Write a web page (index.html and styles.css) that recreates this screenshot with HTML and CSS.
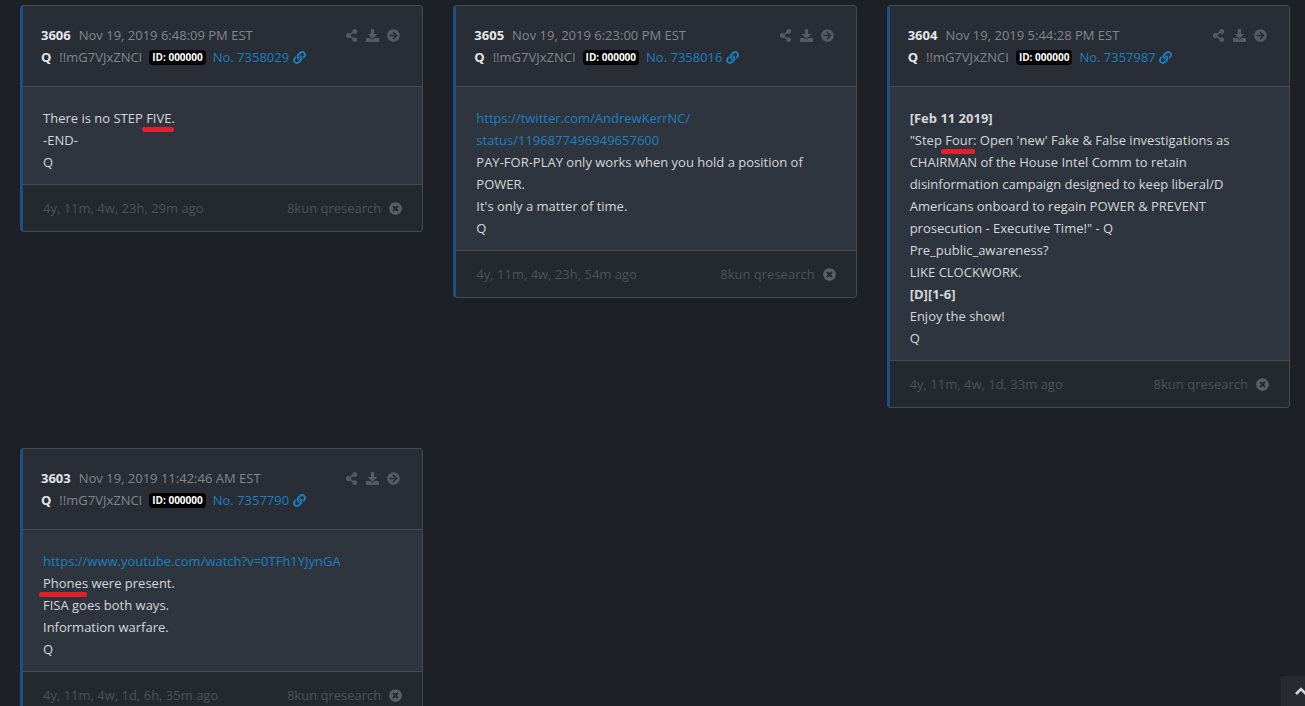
FILE: index.html
```html
<!DOCTYPE html>
<html lang="en">
<head>
<meta charset="utf-8">
<title>Posts</title>
<meta name="viewport" content="width=device-width, initial-scale=1">
<link rel="stylesheet" href="styles.css">
</head>
<body>
<svg class="sprite" aria-hidden="true">
  <symbol id="share" viewBox="0 0 448 512"><path d="M352 320c-22.600 0-43.400 7.800-59.800 20.900l-102.500-64.100a96.600 96.600 0 0 0 0-41.600l102.500-64.100C308.600 184.200 329.400 192 352 192c53 0 96-43 96-96S405 0 352 0s-96 43-96 96c0 7.200.8 14.100 2.300 20.800l-102.500 64.100C139.400 167.800 118.600 160 96 160c-53 0-96 43-96 96s43 96 96 96c22.600 0 43.400-7.800 59.800-20.900l102.500 64.100A96.300 96.300 0 0 0 256 416c0 53 43 96 96 96s96-43 96-96-43-96-96-96z"/></symbol>
  <symbol id="download" viewBox="0 0 512 512"><path d="M216 0h80c13.300 0 24 10.700 24 24v168h87.700c17.800 0 26.700 21.500 14.100 34.100L269.700 378.300c-7.500 7.500-19.800 7.500-27.300 0L90.100 226.100c-12.600-12.600-3.700-34.100 14.100-34.100H192V24c0-13.300 10.700-24 24-24zm296 376v112c0 13.300-10.700 24-24 24H24c-13.300 0-24-10.700-24-24V376c0-13.300 10.700-24 24-24h146.700l49 49c20.100 20.100 52.500 20.100 72.600 0l49-49H488c13.300 0 24 10.700 24 24z"/></symbol>
  <symbol id="arrow" viewBox="0 0 512 512"><path d="M256 8c137 0 248 111 248 248S393 504 256 504 8 393 8 256 119 8 256 8zm-28.900 143.600l75.500 72.400H120c-13.300 0-24 10.700-24 24v16c0 13.300 10.700 24 24 24h182.600l-75.500 72.400c-9.700 9.300-9.900 24.800-.4 34.300l11 10.900c9.400 9.400 24.600 9.400 33.900 0L404.300 273c9.400-9.400 9.400-24.600 0-33.900L271.600 106.300c-9.400-9.400-24.600-9.400-33.900 0l-11 10.900c-9.500 9.600-9.300 25.100.4 34.400z"/></symbol>
  <symbol id="close" viewBox="0 0 512 512"><path d="M256 8C119 8 8 119 8 256s111 248 248 248 248-111 248-248S393 8 256 8zm121.600 313.100c4.700 4.700 4.700 12.300 0 17L338 377.600c-4.700 4.700-12.300 4.700-17 0L256 312l-65.100 65.600c-4.700 4.700-12.300 4.700-17 0L134.400 338c-4.700-4.700-4.700-12.300 0-17l65.600-65-65.600-65.100c-4.700-4.700-4.700-12.300 0-17l39.600-39.600c4.700-4.700 12.300-4.700 17 0l65 65.700 65.100-65.600c4.700-4.700 12.300-4.700 17 0l39.600 39.600c4.700 4.700 4.700 12.300 0 17L312 256z"/></symbol>
  <symbol id="link" viewBox="0 0 512 512"><path d="M326.600 185.400c59.700 59.800 58.900 155.700.4 214.600l-.4.400-67.200 67.200c-59.300 59.300-155.700 59.300-215 0s-59.300-155.700 0-215l37.100-37.100c9.800-9.800 26.800-3.300 27.300 10.600.6 17.700 3.800 35.500 9.700 52.700 2 5.800.6 12.300-3.800 16.600l-13.100 13.100c-28 28-28.900 73.700-1.200 102 28 28.600 74.100 28.700 102.300.5l67.200-67.200c28.200-28.200 28.100-73.800 0-101.800-3.700-3.700-7.400-6.600-10.300-8.600a16 16 0 0 1-6.900-12.600c-.4-10.600 3.300-21.500 11.700-29.800l21.100-21.100c5.500-5.500 14.200-6.200 20.600-1.700a152.500 152.500 0 0 1 20.500 17.200zM467.500 44.400c-59.300-59.300-155.700-59.300-215 0l-67.200 67.200-.4.400c-58.600 58.900-59.400 154.800.4 214.600a152.500 152.500 0 0 0 20.500 17.200c6.400 4.500 15.100 3.800 20.600-1.700l21.100-21.100c8.400-8.400 12.100-19.200 11.700-29.800a16 16 0 0 0-6.900-12.600c-2.900-2-6.600-4.900-10.300-8.600-28.100-28.100-28.200-73.600 0-101.800l67.200-67.200c28.200-28.200 74.300-28.100 102.300.5 27.800 28.300 26.900 73.900-1.200 102l-13.100 13.100c-4.400 4.400-5.800 10.800-3.800 16.600 5.900 17.200 9 35 9.700 52.700.5 13.900 17.500 20.400 27.300 10.600l37.100-37.100c59.300-59.300 59.300-155.700 0-215z"/></symbol>
</svg>

<main class="posts">
  <article class="card">
    <header class="head">
      <div class="meta">
        <div><b class="num">3606</b><time>Nov 19, 2019 6:48:09 PM EST</time></div>
        <div class="author"><b>Q</b><span>!!mG7VJxZNCI</span><span class="badge">ID: 000000</span><a href="#3606">No. 7358029 <svg class="icon"><use href="#link"/></svg></a></div>
      </div>
      <div class="actions">
        <button aria-label="Share"><svg class="icon"><use href="#share"/></svg></button>
        <button aria-label="Download"><svg class="icon"><use href="#download"/></svg></button>
        <button aria-label="Open"><svg class="icon"><use href="#arrow"/></svg></button>
      </div>
    </header>
    <div class="body">There is no STEP <span class="mark">FIVE.</span><br>-END-<br>Q</div>
    <footer class="foot"><span>4y, 11m, 4w, 23h, 29m ago</span><span class="source">8kun qresearch <button aria-label="Close"><svg class="icon"><use href="#close"/></svg></button></span></footer>
  </article>

  <article class="card">
    <header class="head">
      <div class="meta">
        <div><b class="num">3605</b><time>Nov 19, 2019 6:23:00 PM EST</time></div>
        <div class="author"><b>Q</b><span>!!mG7VJxZNCI</span><span class="badge">ID: 000000</span><a href="#3605">No. 7358016 <svg class="icon"><use href="#link"/></svg></a></div>
      </div>
      <div class="actions">
        <button aria-label="Share"><svg class="icon"><use href="#share"/></svg></button>
        <button aria-label="Download"><svg class="icon"><use href="#download"/></svg></button>
        <button aria-label="Open"><svg class="icon"><use href="#arrow"/></svg></button>
      </div>
    </header>
    <div class="body"><a href="#tweet">https://twitter.com/AndrewKerrNC/<wbr>status/1196877496949657600</a><br>PAY-FOR-PLAY only works when you hold a position of POWER.<br>It's only a matter of time.<br>Q</div>
    <footer class="foot"><span>4y, 11m, 4w, 23h, 54m ago</span><span class="source">8kun qresearch <button aria-label="Close"><svg class="icon"><use href="#close"/></svg></button></span></footer>
  </article>

  <article class="card">
    <header class="head">
      <div class="meta">
        <div><b class="num">3604</b><time>Nov 19, 2019 5:44:28 PM EST</time></div>
        <div class="author"><b>Q</b><span>!!mG7VJxZNCI</span><span class="badge">ID: 000000</span><a href="#3604">No. 7357987 <svg class="icon"><use href="#link"/></svg></a></div>
      </div>
      <div class="actions">
        <button aria-label="Share"><svg class="icon"><use href="#share"/></svg></button>
        <button aria-label="Download"><svg class="icon"><use href="#download"/></svg></button>
        <button aria-label="Open"><svg class="icon"><use href="#arrow"/></svg></button>
      </div>
    </header>
    <div class="body"><b>[Feb 11 2019]</b><br>"Step <span class="mark">Four:</span> Open 'new' Fake &amp; False investigations as CHAIRMAN of the House Intel Comm to retain disinformation campaign designed to keep liberal/D Americans onboard to regain POWER &amp; PREVENT prosecution - Executive Time!" - Q<br>Pre_public_awareness?<br>LIKE CLOCKWORK.<br><b>[D][1-6]</b><br>Enjoy the show!<br>Q</div>
    <footer class="foot"><span>4y, 11m, 4w, 1d, 33m ago</span><span class="source">8kun qresearch <button aria-label="Close"><svg class="icon"><use href="#close"/></svg></button></span></footer>
  </article>

  <article class="card">
    <header class="head">
      <div class="meta">
        <div><b class="num">3603</b><time>Nov 19, 2019 11:42:46 AM EST</time></div>
        <div class="author"><b>Q</b><span>!!mG7VJxZNCI</span><span class="badge">ID: 000000</span><a href="#3603">No. 7357790 <svg class="icon"><use href="#link"/></svg></a></div>
      </div>
      <div class="actions">
        <button aria-label="Share"><svg class="icon"><use href="#share"/></svg></button>
        <button aria-label="Download"><svg class="icon"><use href="#download"/></svg></button>
        <button aria-label="Open"><svg class="icon"><use href="#arrow"/></svg></button>
      </div>
    </header>
    <div class="body"><a href="#video">https://www.youtube.com/watch?v=0TFh1YJynGA</a><br><span class="mark">Phones</span> were present.<br>FISA goes both ways.<br>Information warfare.<br>Q</div>
    <footer class="foot"><span>4y, 11m, 4w, 1d, 6h, 35m ago</span><span class="source">8kun qresearch <button aria-label="Close"><svg class="icon"><use href="#close"/></svg></button></span></footer>
  </article>
</main>

<button class="to-top" aria-label="Back to top"><svg width="14" height="10" viewBox="0 0 14 10"><path d="M2 8l5-5 5 5" fill="none" stroke="currentColor" stroke-width="2.500"/></svg></button>
</body>
</html>
```
FILE: styles.css
```css
* {
  box-sizing: border-box;
}

html {
  scrollbar-width: none;
}

body {
  margin: 0;
  background: #1d2027;
  color: #d5d7da;
  font: 13px/22px "Open Sans", "Noto Sans", sans-serif;
}

.sprite {
  display: none;
}

a {
  color: #1a80c0;
  text-decoration: none;
}

button {
  display: flex;
  padding: 0;
  border: 0;
  background: none;
  color: inherit;
}

.icon {
  width: 13px;
  height: 13px;
  fill: currentColor;
}

.posts {
  display: grid;
  grid-template-columns: repeat(auto-fill, minmax(360px, 1fr));
  align-items: start;
  gap: 40px 30px;
  padding: 5px 15px 40px 20px;
}

.card {
  border: 1px solid #454b54;
  border-left: 3px solid #1f4e85;
  border-radius: 4px;
  background: #2f353e;
  overflow: hidden;
}

.head {
  display: flex;
  justify-content: space-between;
  padding: 18px 22px 18px 18px;
  border-bottom: 1px solid #454b54;
  background: #292d35;
  color: #82868e;
}

.head b {
  color: #e4e5e7;
}

.num {
  margin-right: 8px;
}

.author {
  display: flex;
  align-items: center;
}

.author b {
  margin-right: 8px;
}

.author .icon {
  vertical-align: -2px;
}

.author .badge {
  margin: 0 7px;
  padding: 0 3px;
  border-radius: 4px;
  background: #000;
  color: #fff;
  font-size: 10px;
  font-weight: 700;
  line-height: 15px;
}

.actions {
  display: flex;
  align-items: center;
  gap: 8px;
  height: 22px;
  color: #555a64;
}

.body {
  padding: 20px 20px 11px;
  overflow-wrap: anywhere;
}

.foot {
  display: flex;
  justify-content: space-between;
  padding: 12px 20px;
  border-top: 1px solid #454b54;
  background: #24282f;
  color: #4d525b;
}

.source {
  display: flex;
  align-items: center;
  gap: 8px;
}

.source .icon {
  color: #5a5f69;
}

.mark {
  position: relative;
}

.mark::after {
  content: "";
  position: absolute;
  left: -4px;
  right: 1px;
  bottom: -5px;
  height: 5px;
  border-radius: 2px;
  background: #e6202b;
}

.to-top {
  position: fixed;
  right: -16px;
  bottom: 0;
  align-items: center;
  justify-content: center;
  width: 40px;
  height: 30px;
  border-radius: 4px 4px 0 0;
  background: #272a31;
  color: #d5d7da;
}
```
